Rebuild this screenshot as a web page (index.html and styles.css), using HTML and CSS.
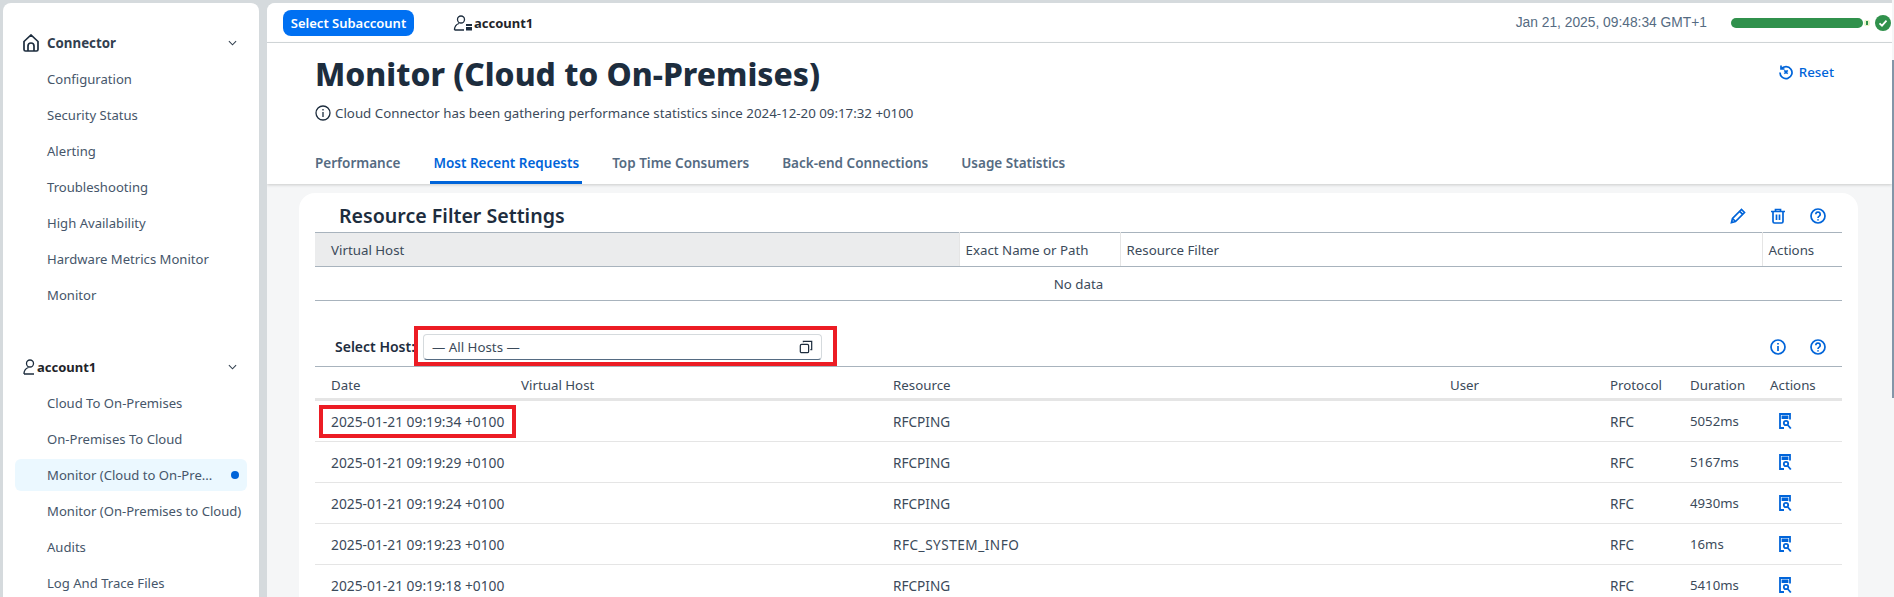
FILE: index.html

```html
<!DOCTYPE html>
<html lang="en">
<head>
  <meta charset="UTF-8" />
  <title>Monitor (Cloud to On-Premises)</title>
  <link rel="stylesheet" href="styles.css">
</head>
<body>

<aside class="sidebar">
  <div class="group">
    <div class="group-head">
      <svg class="group-icon" viewBox="0 0 16 18"><path d="M1 7.500 8 1l7 6.500v8a1.500 1.500 0 0 1-1.500 1.500h-11A1.500 1.500 0 0 1 1 15.500zM5 17v-5a3 3 0 0 1 6 0v5"/></svg>
      <span class="group-name">Connector</span>
      <svg class="chevron" viewBox="0 0 10 6"><path d="M1 1l4 4 4-4"/></svg>
    </div>
    <a class="item">Configuration</a>
    <a class="item">Security Status</a>
    <a class="item">Alerting</a>
    <a class="item">Troubleshooting</a>
    <a class="item">High Availability</a>
    <a class="item">Hardware Metrics Monitor</a>
    <a class="item">Monitor</a>
  </div>
  <div class="group group-account">
    <div class="group-head">
      <svg class="user-icon" viewBox="0 0 12 16"><circle cx="7" cy="4.500" r="3.500"/><path d="M1 15c0-3.500 1.500-5.500 4.500-6.500M1 15h10"/></svg>
      <span class="account-name">account1</span>
      <svg class="chevron" viewBox="0 0 10 6"><path d="M1 1l4 4 4-4"/></svg>
    </div>
    <a class="item">Cloud To On-Premises</a>
    <a class="item">On-Premises To Cloud</a>
    <a class="item item-active">Monitor (Cloud to On-Pre...<i class="dot"></i></a>
    <a class="item">Monitor (On-Premises to Cloud)</a>
    <a class="item">Audits</a>
    <a class="item">Log And Trace Files</a>
  </div>
</aside>

<main class="main">
  <header class="topbar">
    <button class="subaccount-btn">Select Subaccount</button>
    <svg class="top-user" viewBox="0 0 20 16"><circle cx="8" cy="4.500" r="3.500"/><path d="M1.500 15c0-3.500 1.500-5.500 4.500-6.500M1.500 15H11"/><rect class="solid" x="13" y="9" width="6" height="2"/><rect class="solid" x="13" y="12" width="6" height="3.500"/></svg>
    <span class="account-name">account1</span>
    <span class="clock">Jan 21, 2025, 09:48:34 GMT+1</span>
    <div class="health">
      <div class="health-bar"></div>
      <div class="health-tip"></div>
      <svg class="health-check" viewBox="0 0 16 16"><circle cx="8" cy="8" r="8"/><path d="M4.500 8.300 7 10.700l4.500-5"/></svg>
    </div>
  </header>

  <section class="page-head">
    <div class="title-row">
      <h1>Monitor (Cloud to On-Premises)</h1>
      <a class="reset">
        <svg class="icon" viewBox="0 0 16 16"><path d="M3 1.500v3.500h3.500M3.200 5A6 6 0 1 1 2 8.500M6.300 6.300l3.400 3.400M9.700 6.300l-3.400 3.400"/></svg>
        Reset
      </a>
    </div>
    <p class="subtitle">
      <svg class="info-small" viewBox="0 0 16 16"><circle cx="8" cy="8" r="7"/><path d="M8 7v5M8 4v1.500"/></svg>
      Cloud Connector has been gathering performance statistics since 2024-12-20 09:17:32 +0100
    </p>
    <nav class="tabs">
      <a class="tab">Performance</a>
      <a class="tab tab-active">Most Recent Requests</a>
      <a class="tab">Top Time Consumers</a>
      <a class="tab">Back-end Connections</a>
      <a class="tab">Usage Statistics</a>
    </nav>
  </section>

  <section class="content">
    <div class="card">
      <div class="card-head">
        <h2>Resource Filter Settings</h2>
        <div class="icon-btns">
          <svg class="icon" viewBox="0 0 16 16"><path d="M1.500 14.500l1-4L11.500 1.500l3 3-9 9zM2.500 10.500l3 3M9.700 3.300l3 3"/></svg>
          <svg class="icon" viewBox="0 0 16 16"><path d="M1 3.500h14M5.500 3.500V1.500h5v2M3 3.500v10a1.500 1.500 0 0 0 1.500 1.500h7a1.500 1.500 0 0 0 1.500-1.500v-10M6.500 6.500v5.500M9.500 6.500v5.500"/></svg>
          <svg class="icon" viewBox="0 0 16 16"><circle cx="8" cy="8" r="7"/><path d="M5.800 6.200a2.200 2.200 0 1 1 3.400 1.900C8.400 8.600 8 9 8 10M8 11.300v1.200"/></svg>
        </div>
      </div>
      <table class="filter-table">
        <colgroup>
          <col class="col-vhost"><col class="col-exact"><col class="col-filter"><col>
        </colgroup>
        <thead>
          <tr>
            <th class="th-sorted">Virtual Host</th>
            <th>Exact Name or Path</th>
            <th>Resource Filter</th>
            <th>Actions</th>
          </tr>
        </thead>
        <tbody>
          <tr><td class="no-data" colspan="4">No data</td></tr>
        </tbody>
      </table>

      <div class="host-bar">
        <label class="host-label">Select Host:</label>
        <div class="host-input">
          <span>— All Hosts —</span>
          <svg class="copy-icon" viewBox="0 0 16 16"><rect x="1.500" y="5" width="9.500" height="9.500" rx="1.500"/><path d="M5 2.500V1.500h9.500V11H13"/></svg>
          <div class="mark mark-host"></div>
        </div>
        <div class="icon-btns">
          <svg class="icon" viewBox="0 0 16 16"><circle cx="8" cy="8" r="7"/><path d="M8 7v5M8 4v1.500"/></svg>
          <svg class="icon" viewBox="0 0 16 16"><circle cx="8" cy="8" r="7"/><path d="M5.800 6.200a2.200 2.200 0 1 1 3.400 1.900C8.400 8.600 8 9 8 10M8 11.300v1.200"/></svg>
        </div>
      </div>

      <table class="req-table">
        <colgroup>
          <col class="col-date"><col class="col-host"><col class="col-res"><col class="col-user"><col class="col-proto"><col class="col-dur"><col>
        </colgroup>
        <thead>
          <tr><th>Date</th><th>Virtual Host</th><th>Resource</th><th>User</th><th>Protocol</th><th>Duration</th><th>Actions</th></tr>
        </thead>
        <tbody>
          <tr>
            <td class="date-cell">2025-01-21 09:19:34 +0100<div class="mark mark-date"></div></td><td></td><td>RFCPING</td><td></td><td>RFC</td><td class="dur">5052ms</td>
            <td><svg class="icon doc-icon" viewBox="0 0 13 16"><path d="M5 15H1V1h10v5.500M3.500 3.500h5v1.500h-5z"/><circle cx="7" cy="10" r="2.200"/><path d="M8.800 12l3 3.500"/></svg></td>
          </tr>
          <tr>
            <td class="date-cell">2025-01-21 09:19:29 +0100</td><td></td><td>RFCPING</td><td></td><td>RFC</td><td class="dur">5167ms</td>
            <td><svg class="icon doc-icon" viewBox="0 0 13 16"><path d="M5 15H1V1h10v5.500M3.500 3.500h5v1.500h-5z"/><circle cx="7" cy="10" r="2.200"/><path d="M8.800 12l3 3.500"/></svg></td>
          </tr>
          <tr>
            <td class="date-cell">2025-01-21 09:19:24 +0100</td><td></td><td>RFCPING</td><td></td><td>RFC</td><td class="dur">4930ms</td>
            <td><svg class="icon doc-icon" viewBox="0 0 13 16"><path d="M5 15H1V1h10v5.500M3.500 3.500h5v1.500h-5z"/><circle cx="7" cy="10" r="2.200"/><path d="M8.800 12l3 3.500"/></svg></td>
          </tr>
          <tr>
            <td class="date-cell">2025-01-21 09:19:23 +0100</td><td></td><td class="caps">RFC_SYSTEM_INFO</td><td></td><td>RFC</td><td class="dur">16ms</td>
            <td><svg class="icon doc-icon" viewBox="0 0 13 16"><path d="M5 15H1V1h10v5.500M3.500 3.500h5v1.500h-5z"/><circle cx="7" cy="10" r="2.200"/><path d="M8.800 12l3 3.500"/></svg></td>
          </tr>
          <tr>
            <td class="date-cell">2025-01-21 09:19:18 +0100</td><td></td><td>RFCPING</td><td></td><td>RFC</td><td class="dur">5410ms</td>
            <td><svg class="icon doc-icon" viewBox="0 0 13 16"><path d="M5 15H1V1h10v5.500M3.500 3.500h5v1.500h-5z"/><circle cx="7" cy="10" r="2.200"/><path d="M8.800 12l3 3.500"/></svg></td>
          </tr>
        </tbody>
      </table>
    </div>
  </section>
</main>

<div class="scroll-track"><div class="scroll-thumb"></div></div>

</body>
</html>
```

FILE: styles.css

```css
html, body {
  height: 597px;
  overflow: hidden;
}
body {
  margin: 0;
  padding: 3px 0 0 3px;
  box-sizing: border-box;
  display: flex;
  gap: 8px;
  background: #d5dadd;
  font-family: "Noto Sans", sans-serif;
  font-size: 13.3px;
  color: #3b4a5a;
}
svg {
  fill: none;
  stroke: currentColor;
  flex: none;
}

/* sidebar */
.sidebar {
  width: 256px;
  flex: none;
  background: #fff;
  border-radius: 8px 8px 0 0;
  padding: 22px 12px 0;
  box-sizing: border-box;
}
.group {
  display: flex;
  flex-direction: column;
}
.group-account {
  margin-top: 36px;
}
.group-head {
  height: 36px;
  flex: none;
  display: flex;
  align-items: center;
  padding-left: 8px;
  color: #32404f;
}
.group-icon {
  width: 16px;
  height: 18px;
  margin-right: 8px;
  stroke: #1d2d3e;
  stroke-width: 1.700;
}
.group-name {
  font-weight: 700;
  flex: 1;
}
.user-icon {
  width: 12px;
  height: 16px;
  margin-right: 2px;
  stroke: #1d2d3e;
  stroke-width: 1.300;
}
.account-name {
  font-weight: 700;
  font-size: 13px;
  color: #1f2429;
  flex: none;
}
.group-account .account-name {
  flex: 1;
}
.chevron {
  width: 9px;
  height: 6px;
  margin-right: 10px;
  stroke: #32404f;
  stroke-width: 1.2;
}
.item {
  height: 32px;
  flex: none;
  margin: 2px 0;
  display: flex;
  align-items: center;
  padding-left: 32px;
  border-radius: 6px;
  font-size: 13.100px;
  color: #46566a;
  white-space: nowrap;
}
.item-active {
  background: #ebf8ff;
}
.dot {
  width: 8px;
  height: 8px;
  margin: 0 8px 0 auto;
  border-radius: 50%;
  background: #0064d9;
}

/* main area */
.main {
  flex: 1;
  min-width: 0;
  margin-right: 2px;
  display: flex;
  flex-direction: column;
  background: #f5f6f7;
  border-radius: 8px 0 0 0;
  overflow: hidden;
}
.topbar {
  height: 39px;
  flex: none;
  display: flex;
  align-items: center;
  padding: 0 1px 0 16px;
  background: #fff;
  border-bottom: 1px solid #d5dadd;
}
.subaccount-btn {
  width: 131px;
  height: 26px;
  padding: 0;
  border: none;
  border-radius: 8px;
  background: #0070f2;
  color: #fff;
  font: 600 13px "Noto Sans", sans-serif;
}
.top-user {
  width: 20px;
  height: 16px;
  margin-left: 39px;
  margin-right: 1px;
  stroke: #1d2d3e;
  stroke-width: 1.300;
}
.top-user .solid {
  fill: #1d2d3e;
  stroke: none;
}
.clock {
  margin-left: auto;
  font-family: "Liberation Sans", sans-serif;
  font-size: 13.800px;
  color: #556b82;
}
.health {
  display: flex;
  align-items: center;
  margin-left: 24px;
}
.health-bar {
  width: 132px;
  height: 10px;
  border-radius: 5px;
  background: #30914c;
}
.health-tip {
  width: 6px;
  height: 6px;
  background: #30914c;
  border: 1px solid #ebf5cb;
  border-width: 1px 2px;
  box-sizing: border-box;
  margin: 0 5px 0 1px;
  border-radius: 2px;
}
.health-check {
  width: 16px;
  height: 16px;
  fill: #30914c;
  stroke: none;
}
.health-check path {
  fill: none;
  stroke: #fff;
  stroke-width: 1.800;
}

.page-head {
  flex: none;
  padding: 11px 0 0 48px;
  background: #fff;
  box-shadow: 0 1px 3px rgba(0, 0, 0, 0.18);
  position: relative;
}
.title-row {
  display: flex;
  align-items: flex-start;
  justify-content: space-between;
  padding-right: 58px;
}
h1 {
  margin: 0;
  font-size: 31.800px;
  line-height: 40px;
  font-weight: 800;
  color: #1d2d3e;
}
.reset {
  display: flex;
  align-items: center;
  gap: 5px;
  margin-top: 9px;
  color: #0064d9;
  font-weight: 500;
}
.icon {
  width: 16px;
  height: 16px;
  color: #0064d9;
  stroke-width: 1.700;
}
.subtitle {
  margin: 9px 0 0;
  line-height: 20px;
  display: flex;
  align-items: center;
  gap: 4px;
}
.info-small {
  width: 16px;
  height: 16px;
  stroke: #1d2d3e;
  stroke-width: 1.300;
}
.tabs {
  display: flex;
  margin: 20px 0 0 -3px;
  gap: 27px;
  font-size: 13.500px;
}
.tab {
  height: 41px;
  box-sizing: border-box;
  padding: 0 3px 2px;
  display: flex;
  align-items: center;
  font-weight: 600;
  color: #556b82;
}
.tab-active {
  color: #0064d9;
  border-bottom: 3px solid #0064d9;
  padding-bottom: 0;
  padding-top: 1px;
}

/* card */
.content {
  flex: 1;
  padding: 9px 34px 0 32px;
}
.card {
  background: #fff;
  border-radius: 16px 16px 0 0;
  padding: 0 16px;
  height: 500px;
}
.card-head {
  height: 39px;
  box-sizing: border-box;
  padding-top: 6px;
  display: flex;
  align-items: center;
  justify-content: space-between;
}
h2 {
  margin: 0 0 0 24px;
  font-size: 19.600px;
  font-weight: 600;
  color: #1d2d3e;
}
.icon-btns {
  display: flex;
  gap: 24px;
  margin-right: 16px;
}
table {
  width: 100%;
  border-collapse: collapse;
  table-layout: fixed;
}
th, td {
  padding: 0 16px;
  text-align: left;
  font-weight: 400;
  white-space: nowrap;
}
th {
  font-size: 13.300px;
}
td {
  font-size: 13.600px;
}
.col-vhost { width: 644px; }
.col-exact { width: 161px; }
.col-filter { width: 642px; }

.filter-table {
  border-top: 1px solid #a8b3bd;
}
.filter-table th {
  height: 33px;
  padding-left: 6px;
  border-bottom: 1px solid #a8b3bd;
  border-left: 1px solid #e5e5e5;
}
.filter-table th:first-child {
  padding-left: 16px;
  border-left: none;
}
.th-sorted {
  background: #ebeced;
}
.no-data {
  height: 33px;
  font-size: 13.300px;
  text-align: center;
  border-bottom: 1px solid #a8b3bd;
}

.host-bar {
  height: 65px;
  box-sizing: border-box;
  padding: 33px 0 0 20px;
  display: flex;
  align-items: flex-start;
  justify-content: space-between;
}
.host-label {
  width: 88px;
  flex: none;
  line-height: 26px;
  font-size: 14px;
  font-weight: 600;
  color: #1d2d3e;
}
.host-input {
  position: relative;
  width: 399px;
  height: 26px;
  box-sizing: border-box;
  margin-right: auto;
  padding: 0 8px;
  display: flex;
  align-items: center;
  justify-content: space-between;
  border: 1px solid #d5dadd;
  border-bottom: 1px solid #556b82;
  border-radius: 4px;
}
.host-bar .icon-btns {
  margin-top: 5px;
}
.copy-icon {
  width: 14px;
  height: 14px;
  stroke: #1d2d3e;
  stroke-width: 1.400;
}
.mark {
  position: absolute;
  border: 4px solid #ec1c24;
  box-sizing: border-box;
  pointer-events: none;
}
.mark-host {
  left: -10px;
  top: -9px;
  width: 423px;
  height: 40px;
}
.mark-date {
  left: 4px;
  top: 4px;
  width: 197px;
  height: 33px;
}

.req-table {
  border-top: 1px solid #a8b3bd;
}
.req-table th {
  height: 33px;
  padding-top: 4px;
  box-sizing: border-box;
  border-bottom: 3px solid #e5e5e5;
}
.req-table td {
  height: 40px;
  border-bottom: 1px solid #e5e5e5;
}
.req-table .date-cell {
  position: relative;
  font-size: 13.800px;
}
.req-table .dur {
  font-size: 13.200px;
}
.caps {
  letter-spacing: 0.500px;
}
.col-date { width: 190px; }
.col-host { width: 372px; }
.col-res { width: 557px; }
.col-user { width: 160px; }
.col-proto { width: 80px; }
.col-dur { width: 80px; }
.doc-icon {
  display: block;
  width: 13px;
  margin-left: 9px;
  stroke-width: 1.800;
}

.scroll-track {
  position: absolute;
  top: 0;
  right: 0;
  width: 2px;
  height: 597px;
  background: #f5f6f7;
}
.scroll-thumb {
  margin-top: 60px;
  height: 338px;
  background: #8396a8;
}
```
